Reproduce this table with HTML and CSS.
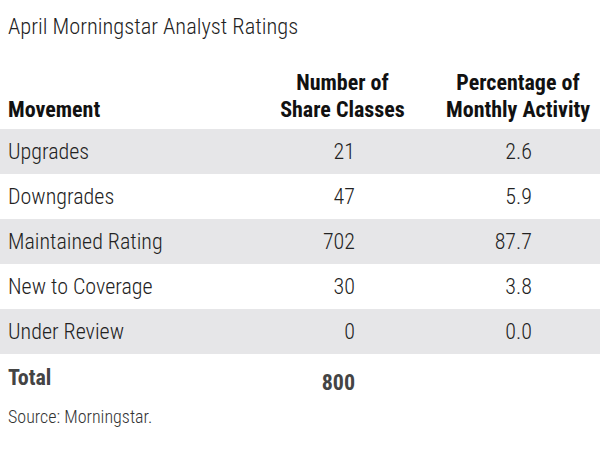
FILE: index.html
```html
<!DOCTYPE html>
<html>
<head>
<meta charset="utf-8">
<link rel="stylesheet" href="styles.css">
</head>
<body>
<div class="page">
  <h1 class="title">April Morningstar Analyst Ratings</h1>
  <table class="ratings">
    <colgroup>
      <col class="c1"><col class="c2"><col class="c3">
    </colgroup>
    <thead>
      <tr>
        <th class="lbl">Movement</th>
        <th class="hnum">Number of<br>Share Classes</th>
        <th class="hpct">Percentage of<br>Monthly Activity</th>
      </tr>
    </thead>
    <tbody>
      <tr class="shade"><td class="lbl">Upgrades</td><td class="num">21</td><td class="pct">2.6</td></tr>
      <tr><td class="lbl">Downgrades</td><td class="num">47</td><td class="pct">5.9</td></tr>
      <tr class="shade"><td class="lbl">Maintained Rating</td><td class="num">702</td><td class="pct">87.7</td></tr>
      <tr><td class="lbl">New to Coverage</td><td class="num">30</td><td class="pct">3.8</td></tr>
      <tr class="shade"><td class="lbl">Under Review</td><td class="num">0</td><td class="pct">0.0</td></tr>
      <tr class="total"><td class="lbl">Total</td><td class="num">800</td><td class="pct"></td></tr>
    </tbody>
  </table>
  <p class="source">Source: Morningstar.</p>
</div>
</body>
</html>
```
FILE: styles.css
```css
* { box-sizing: border-box; }
html, body { margin: 0; padding: 0; background: #fff; }
body {
  font-family: "Roboto Condensed", "Roboto", "Liberation Sans", sans-serif;
  font-stretch: 75%;
  color: #333;
}
.page { width: 600px; height: 451px; overflow: hidden; }
.title {
  margin: 0;
  padding: 10px 0 0 8px;
  font-size: 22.4px;
  font-weight: 300;
  line-height: 32px;
  color: #222;
}
.ratings {
  width: 600px;
  border-collapse: collapse;
  table-layout: fixed;
}
.c1 { width: 270px; }
.c2 { width: 145px; }
.c3 { width: 185px; }
th {
  font-weight: bold;
  font-size: 22px;
  line-height: 27px;
  color: #111;
  vertical-align: bottom;
  height: 87px;
  padding: 0 0 6px 0;
}
th.lbl { text-align: left; padding-left: 8px; }
th.hnum { text-align: center; }
th.hpct { text-align: center; padding-left: 21px; }
td {
  height: 45px;
  font-size: 22px;
  font-weight: 300;
  color: #222;
  padding: 0;
  vertical-align: middle;
}
td.lbl { padding-left: 8px; }
td.num { text-align: right; padding-right: 60px; }
td.pct { text-align: right; padding-right: 68px; }
tr.shade td { background: #e6e6e8; }
tr.total td { font-weight: bold; color: #444; height: 46px; }
tr.total td.num { padding-top: 10px; }
.source {
  margin: 6px 0 0;
  padding: 0 0 0 8px;
  font-size: 18px;
  font-weight: 300;
  line-height: 22px;
  color: #333;
}
```
